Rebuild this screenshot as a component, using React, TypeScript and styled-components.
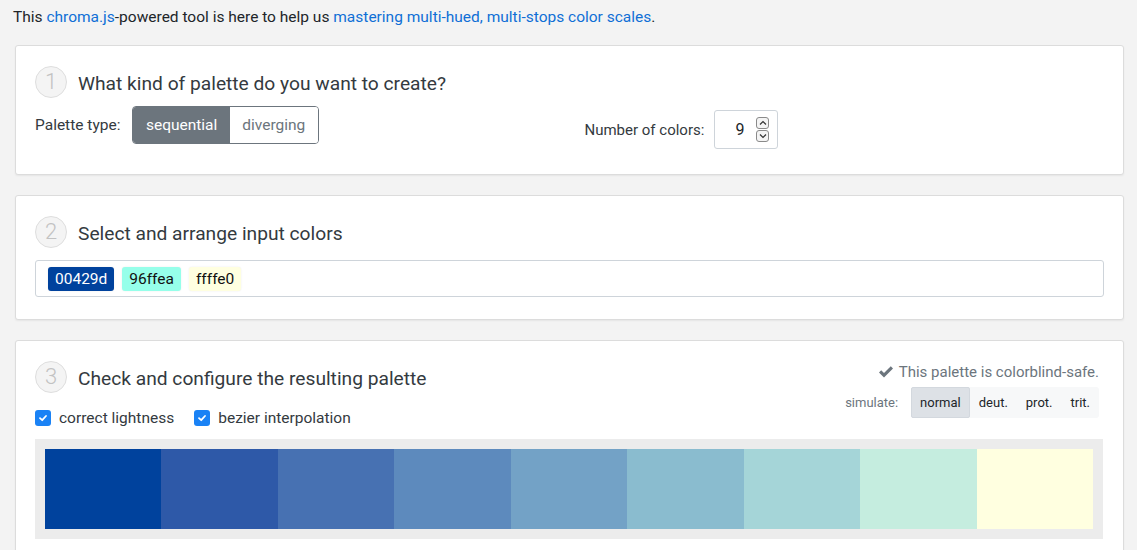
import React from "react";
import styled, { createGlobalStyle } from "styled-components";

const Global = createGlobalStyle`
  html, body { margin: 0; padding: 0; background: #f3f3f3; }
  body {
    font-family: Roboto, "Noto Sans", "Liberation Sans", sans-serif;
    color: #212529;
    font-size: 15.5px;
  }
  * { box-sizing: border-box; }
`;

const Page = styled.div`
  padding: 5px 13px 0 15px;
`;

const Intro = styled.p`
  margin: 0 0 16px -2px;
  line-height: 24px;
  font-size: 15.5px;
  color: #212529;
`;

const Link = styled.a`
  color: #0f6fd6;
  text-decoration: none;
`;

const Card = styled.section<{ $pb?: number }>`
  background: #fff;
  border: 1px solid #dcdcdc;
  border-radius: 3px;
  box-shadow: 0 1px 2px rgba(0, 0, 0, 0.06);
  padding: 20px 19px ${(p) => p.$pb ?? 24}px 19px;
  margin-bottom: 20px;
`;

const HeadRow = styled.div`
  display: flex;
  align-items: center;
  gap: 11px;
  height: 32px;
`;

const Step = styled.div`
  width: 32px;
  height: 32px;
  border-radius: 50%;
  border: 1px solid #dedede;
  background: #f4f4f4;
  color: #c2c2c2;
  font-size: 22px;
  font-weight: 300;
  display: flex;
  align-items: center;
  justify-content: center;
  line-height: 1;
`;

const Title = styled.h2`
  margin: 0;
  padding-top: 3px;
  font-size: 19.2px;
  font-weight: 400;
  color: #343a40;
`;

const TwoCols = styled.div`
  display: grid;
  grid-template-columns: 1fr 1fr;
  column-gap: 30px;
  align-items: start;
  margin-top: 8px;
`;

const Field = styled.div<{ $top?: number; $gap?: number }>`
  display: flex;
  align-items: center;
  gap: ${(p) => p.$gap ?? 12}px;
  margin-top: ${(p) => p.$top ?? 0}px;
`;

const Label = styled.span<{ $size?: number }>`
  color: #343a40;
  font-size: ${(p) => p.$size ?? 15.5}px;
`;

const BtnGroup = styled.div`
  display: inline-flex;
  border: 1px solid #6c757d;
  border-radius: 4px;
  overflow: hidden;
  height: 38px;
`;

const ToggleBtn = styled.div<{ $active?: boolean }>`
  display: flex;
  align-items: center;
  padding: 0 12.5px;
  background: ${(p) => (p.$active ? "#6c757d" : "#fff")};
  color: ${(p) => (p.$active ? "#fff" : "#6c757d")};
`;

const NumberBox = styled.div`
  width: 64px;
  height: 39px;
  border: 1px solid #ced4da;
  border-radius: 3px;
  display: flex;
  align-items: center;
  justify-content: flex-end;
  padding-right: 8px;
  gap: 12px;
  font-size: 16px;
  color: #212529;
`;

const Spinner = styled.div`
  display: flex;
  flex-direction: column;
  gap: 1px;
`;

const SpinBtn = styled.div`
  width: 13px;
  height: 12px;
  border: 1px solid #8a8a8a;
  border-radius: 3px;
  background: #f4f4f4;
  display: flex;
  align-items: center;
  justify-content: center;
`;

const ColorInput = styled.div`
  margin-top: 12px;
  height: 37px;
  border: 1px solid #ced4da;
  border-radius: 3px;
  display: flex;
  align-items: center;
  gap: 8px;
  padding: 0 12px;
`;

const Chip = styled.span<{ $bg: string; $fg: string }>`
  background: ${(p) => p.$bg};
  color: ${(p) => p.$fg};
  border-radius: 3px;
  height: 24px;
  display: inline-flex;
  align-items: center;
  padding: 0 7px;
  box-shadow: 0 0 2px rgba(0, 0, 0, 0.08);
`;

const Grid3 = styled.div`
  display: grid;
  grid-template-columns: 1fr auto;
  align-items: start;
`;

const RightCol = styled.div`
  display: flex;
  flex-direction: column;
  align-items: flex-end;
  padding-right: 5px;
  margin-top: -1px;
`;

const SafeNote = styled.div`
  display: flex;
  align-items: center;
  gap: 5px;
  color: #6c757d;
  font-size: 15px;
  line-height: 24px;
`;

const SimRow = styled.div`
  display: flex;
  align-items: center;
  gap: 13px;
  margin-top: 3px;
`;

const SimLabel = styled.span`
  font-size: 13px;
  color: #6c757d;
`;

const SimGroup = styled.div`
  display: flex;
  background: #f7f8f9;
  border-radius: 3px;
  height: 31px;
`;

const SimBtn = styled.div<{ $active?: boolean }>`
  display: flex;
  align-items: center;
  padding: 0 8px;
  font-size: 13px;
  color: #212529;
  background: ${(p) => (p.$active ? "#dde1e6" : "transparent")};
  border: 1px solid ${(p) => (p.$active ? "#d3d8de" : "transparent")};
  border-radius: 2px;
`;

const Checks = styled.div`
  display: flex;
  align-items: center;
  gap: 20px;
  margin-top: 16px;
`;

const Check = styled.label`
  display: flex;
  align-items: center;
  gap: 8px;
  color: #343a40;
`;

const Box = styled.span`
  width: 16px;
  height: 16px;
  border-radius: 3px;
  background: #1a82f5;
  display: inline-flex;
  align-items: center;
  justify-content: center;
`;

const Swatches = styled.div`
  margin-top: 12px;
  margin-right: 1px;
  background: #ececec;
  padding: 10px;
  display: flex;
`;

const Swatch = styled.div<{ $c: string }>`
  flex: 1;
  height: 80px;
  background: ${(p) => p.$c};
`;

const colors = ["#00429d", "#2e59a8", "#4771b2", "#5d8abd", "#73a2c6", "#8abccf", "#a5d5d8", "#c5eddf", "#ffffe0"];

const Chevron = ({ up }: { up?: boolean }) => (
  <svg width="8" height="6" viewBox="0 0 8 6">
    <path d={up ? "M1 4.5 L4 1.5 L7 4.5" : "M1 1.5 L4 4.5 L7 1.5"} fill="none" stroke="#333" strokeWidth="1.2" />
  </svg>
);

const Tick = () => (
  <svg width="10" height="10" viewBox="0 0 10 10">
    <path d="M2 5.2 L4.2 7.2 L8 3" fill="none" stroke="#fff" strokeWidth="1.8" strokeLinecap="round" strokeLinejoin="round" />
  </svg>
);

const BigCheck = () => (
  <svg width="16" height="14" viewBox="0 0 16 14">
    <path d="M1 7.5 L3.2 5.3 L6 8 L12.8 1.2 L15 3.4 L6 12.4 Z" fill="#6c757d" />
  </svg>
);

export default function App() {
  return (
    <>
      <Global />
      <Page>
        <Intro>
          This <Link href="#">chroma.js</Link>-powered tool is here to help us{" "}
          <Link href="#">mastering multi-hued, multi-stops color scales</Link>.
        </Intro>

        <Card $pb={25}>
          <HeadRow>
            <Step>1</Step>
            <Title>What kind of palette do you want to create?</Title>
          </HeadRow>
          <TwoCols>
            <Field>
              <Label>Palette type:</Label>
              <BtnGroup>
                <ToggleBtn $active>sequential</ToggleBtn>
                <ToggleBtn>diverging</ToggleBtn>
              </BtnGroup>
            </Field>
            <Field $top={4} $gap={10}>
              <Label $size={15}>Number of colors:</Label>
              <NumberBox>
                <span>9</span>
                <Spinner>
                  <SpinBtn><Chevron up /></SpinBtn>
                  <SpinBtn><Chevron /></SpinBtn>
                </Spinner>
              </NumberBox>
            </Field>
          </TwoCols>
        </Card>

        <Card $pb={22}>
          <HeadRow>
            <Step>2</Step>
            <Title>Select and arrange input colors</Title>
          </HeadRow>
          <ColorInput>
            <Chip $bg="#00429d" $fg="#fff">00429d</Chip>
            <Chip $bg="#96ffea" $fg="#111">96ffea</Chip>
            <Chip $bg="#ffffe0" $fg="#111">ffffe0</Chip>
          </ColorInput>
        </Card>

        <Card $pb={20}>
          <Grid3>
            <div>
              <HeadRow>
                <Step>3</Step>
                <Title>Check and configure the resulting palette</Title>
              </HeadRow>
              <Checks>
                <Check><Box><Tick /></Box>correct lightness</Check>
                <Check><Box><Tick /></Box>bezier interpolation</Check>
              </Checks>
            </div>
            <RightCol>
              <SafeNote><BigCheck />This palette is colorblind-safe.</SafeNote>
              <SimRow>
                <SimLabel>simulate:</SimLabel>
                <SimGroup>
                  <SimBtn $active>normal</SimBtn>
                  <SimBtn>deut.</SimBtn>
                  <SimBtn>prot.</SimBtn>
                  <SimBtn>trit.</SimBtn>
                </SimGroup>
              </SimRow>
            </RightCol>
          </Grid3>
          <Swatches>
            {colors.map((c) => (
              <Swatch key={c} $c={c} />
            ))}
          </Swatches>
        </Card>
      </Page>
    </>
  );
}
